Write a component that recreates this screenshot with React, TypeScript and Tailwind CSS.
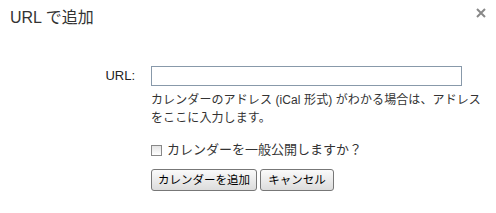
export default function App() {
  return (
    <div className="relative w-[496px] h-[213px] bg-white text-[#222] font-['Liberation_Sans','Noto_Sans_CJK_JP',sans-serif]">
      <div className="flex items-start justify-between pl-[10px] pr-[10px] pt-[8px]">
        <h1 className="text-[16px] leading-[20px] text-[#333]">URL で追加</h1>
        <button className="mt-[-2px] mr-[-2px] p-[2px]">
          <svg width="10" height="10" viewBox="0 0 10 10">
            <path d="M1 1 L9 9 M9 1 L1 9" stroke="#888" strokeWidth="2" />
          </svg>
        </button>
      </div>
      <div className="mt-[38px] flex">
        <label className="w-[135px] text-right text-[13px] leading-[20px]">URL:</label>
        <div className="ml-[16px] flex flex-col">
          <input
            className="w-[311px] h-[20px] border border-[#8899aa] outline-none px-[2px] text-[13px]"
            autoFocus
          />
          <p className="mt-[5px] text-[12px] leading-[18px] text-[#333] whitespace-nowrap tracking-[0.1px]">
            カレンダーのアドレス (iCal 形式) がわかる場合は、アドレス
            <br />
            をここに入力します。
          </p>
          <label className="mt-[15px] flex items-center gap-[5px] text-[13px] leading-[16px] text-[#333]">
            <span className="w-[11px] h-[11px] border border-[#888] bg-gradient-to-b from-[#e4e4e4] to-[#fff]" />
            <span>カレンダーを一般公開しますか？</span>
          </label>
          <div className="mt-[11px] flex gap-[3px]">
            <button className="h-[22px] w-[106px] border border-[#777] rounded-[3px] bg-gradient-to-b from-[#fafafa] to-[#dcdcdc] text-[11.5px] leading-[18px] text-black">
              カレンダーを追加
            </button>
            <button className="h-[22px] w-[74px] border border-[#777] rounded-[3px] bg-gradient-to-b from-[#fafafa] to-[#dcdcdc] text-[11.5px] leading-[18px] text-black">
              キャンセル
            </button>
          </div>
        </div>
      </div>
    </div>
  );
}
